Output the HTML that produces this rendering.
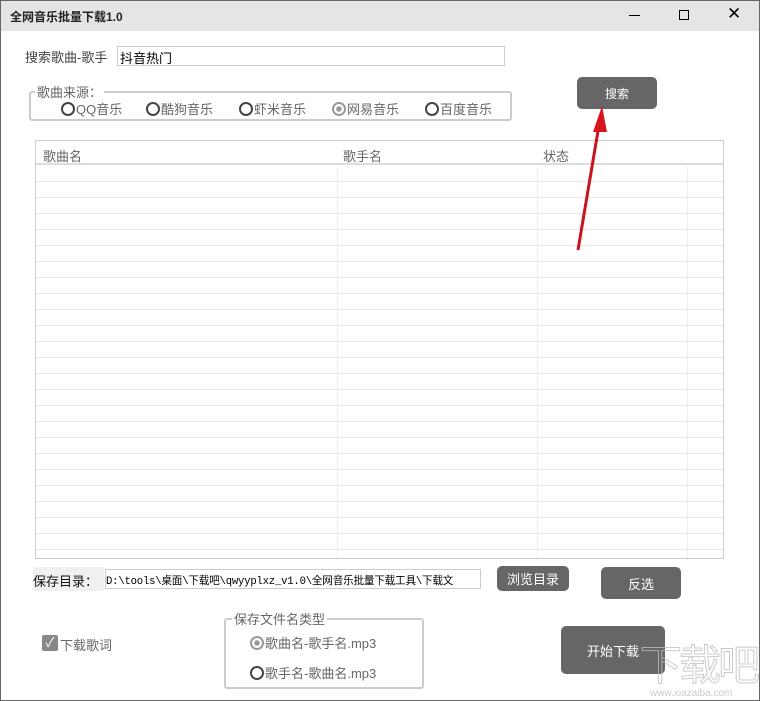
<!DOCTYPE html><html><head><meta charset="utf-8"><style>
*{margin:0;padding:0;box-sizing:border-box}
body{width:760px;height:701px;overflow:hidden;background:#fff;font-family:"Liberation Sans","Noto Sans CJK SC",sans-serif;position:relative;color:#333}
.a{position:absolute}
.t{font-size:12px;color:#444;white-space:nowrap}
.btn{position:absolute;background:#666567;color:#fff;border-radius:5px;font-size:12px;display:flex;align-items:center;justify-content:center}
.rad{display:inline-block;width:14px;height:14px;border:2px solid #444;border-radius:50%;vertical-align:-2px;margin-right:1px}
.radc{border-color:#999;background:radial-gradient(#999 2.5px,#fff 3px)}
.r{font-size:13px;color:#666}
</style></head><body>
<div class="a" style="left:0;top:0;width:760px;height:701px;border:1px solid #666"></div>
<div class="a" style="left:1px;top:1px;width:758px;height:30px;background:#e5e4e6"></div>
<div class="a t" style="left:10px;top:8px;font-weight:bold;font-size:12px;color:#222">全网音乐批量下载1.0</div>
<div class="a" style="left:629px;top:15px;width:11px;height:1px;background:#000"></div>
<div class="a" style="left:679px;top:10px;width:10px;height:10px;border:1px solid #000"></div>
<div class="a" style="left:727px;top:4px;font-size:17px;color:#000;font-weight:300">✕</div>

<div class="a t" style="left:25px;top:47px;font-size:13px">搜索歌曲-歌手</div>
<div class="a" style="left:117px;top:46px;width:388px;height:20px;border:1px solid #ccc;font-size:13px;padding:1px 2px;color:#000">抖音热门</div>

<div class="a" style="left:29px;top:91px;width:483px;height:30px;border:2px solid #ccc;border-radius:3px"></div>
<div class="a t" style="left:35px;top:82px;background:#fff;padding:0 2px;color:#666;font-size:13px">歌曲来源：</div>
<div class="a t r" style="left:61px;top:99px"><span class="rad"></span>QQ音乐</div>
<div class="a t r" style="left:146px;top:99px"><span class="rad"></span>酷狗音乐</div>
<div class="a t r" style="left:239px;top:99px"><span class="rad"></span>虾米音乐</div>
<div class="a t r" style="left:332px;top:99px"><span class="rad radc"></span>网易音乐</div>
<div class="a t r" style="left:425px;top:99px"><span class="rad"></span>百度音乐</div>

<div class="btn" style="left:577px;top:77px;width:80px;height:32px">搜索</div>

<div class="a" style="left:35px;top:140px;width:689px;height:419px;border:1px solid #ccc;
background:
linear-gradient(90deg,transparent 301px,#eee 301px,#eee 302px,transparent 302px,transparent 501px,#eee 501px,#eee 502px,transparent 502px,transparent 651px,#eee 651px,#eee 652px,transparent 652px) 0 25px/100% 393px no-repeat,
repeating-linear-gradient(180deg,transparent 0,transparent 15px,#e9e9e9 15px,#e9e9e9 16px) 0 25px/100% 393px no-repeat"></div>
<div class="a" style="left:36px;top:163px;width:687px;height:2px;background:#ddd"></div>
<div class="a t" style="left:43px;top:146px;color:#666;font-size:13px">歌曲名</div>
<div class="a t" style="left:343px;top:146px;color:#666;font-size:13px">歌手名</div>
<div class="a t" style="left:543px;top:146px;color:#666;font-size:13px">状态</div>

<svg class="a" style="left:560px;top:100px" width="60" height="160"><line x1="18" y1="150" x2="39" y2="25" stroke="#c8141c" stroke-width="3"/><polygon points="42,6 33,32 47,32" fill="#d8141c"/></svg>

<div class="a" style="left:33px;top:567px;width:71px;height:24px;background:#f0f0f0"></div>
<div class="a t" style="left:33px;top:571px;color:#111;font-size:13px">保存目录：</div>
<div class="a" style="left:105px;top:569px;width:376px;height:20px;border:1px solid #ccc;font-family:'Liberation Mono','Noto Sans CJK SC',monospace;font-size:10.6px;letter-spacing:-0.2px;padding:3px 0 0 0;white-space:nowrap;overflow:hidden;color:#000">D:\tools\桌面\下载吧\qwyyplxz_v1.0\全网音乐批量下载工具\下载文</div>
<div class="btn" style="left:497px;top:566px;width:72px;height:25px;font-size:13px">浏览目录</div>
<div class="btn" style="left:601px;top:567px;width:80px;height:32px;font-size:13px">反选</div>

<div class="a" style="left:42px;top:635px;width:16px;height:16px;background:#888;border-radius:2px;color:#fff;font-size:13px;line-height:16px;text-align:center">✓</div>
<div class="a t" style="left:60px;top:635px;color:#666;font-size:13px">下载歌词</div>

<div class="a" style="left:224px;top:618px;width:200px;height:71px;border:2px solid #ccc;border-radius:3px"></div>
<div class="a t" style="left:232px;top:609px;background:#fff;padding:0 2px;color:#666;font-size:13px">保存文件名类型</div>
<div class="a t r" style="left:250px;top:633px"><span class="rad radc"></span>歌曲名-歌手名.mp3</div>
<div class="a t r" style="left:250px;top:663px"><span class="rad"></span>歌手名-歌曲名.mp3</div>

<div class="btn" style="left:561px;top:626px;width:104px;height:48px;font-size:13px">开始下载</div>
<div class="a" style="left:640px;top:632px;font-size:42px;color:transparent;-webkit-text-stroke:1px rgba(190,190,190,0.8);white-space:nowrap;letter-spacing:-3px">下载吧</div>
<div class="a" style="left:650px;top:688px;font-size:10px;color:#ccc">www.xiazaiba.com</div>
</body></html>
